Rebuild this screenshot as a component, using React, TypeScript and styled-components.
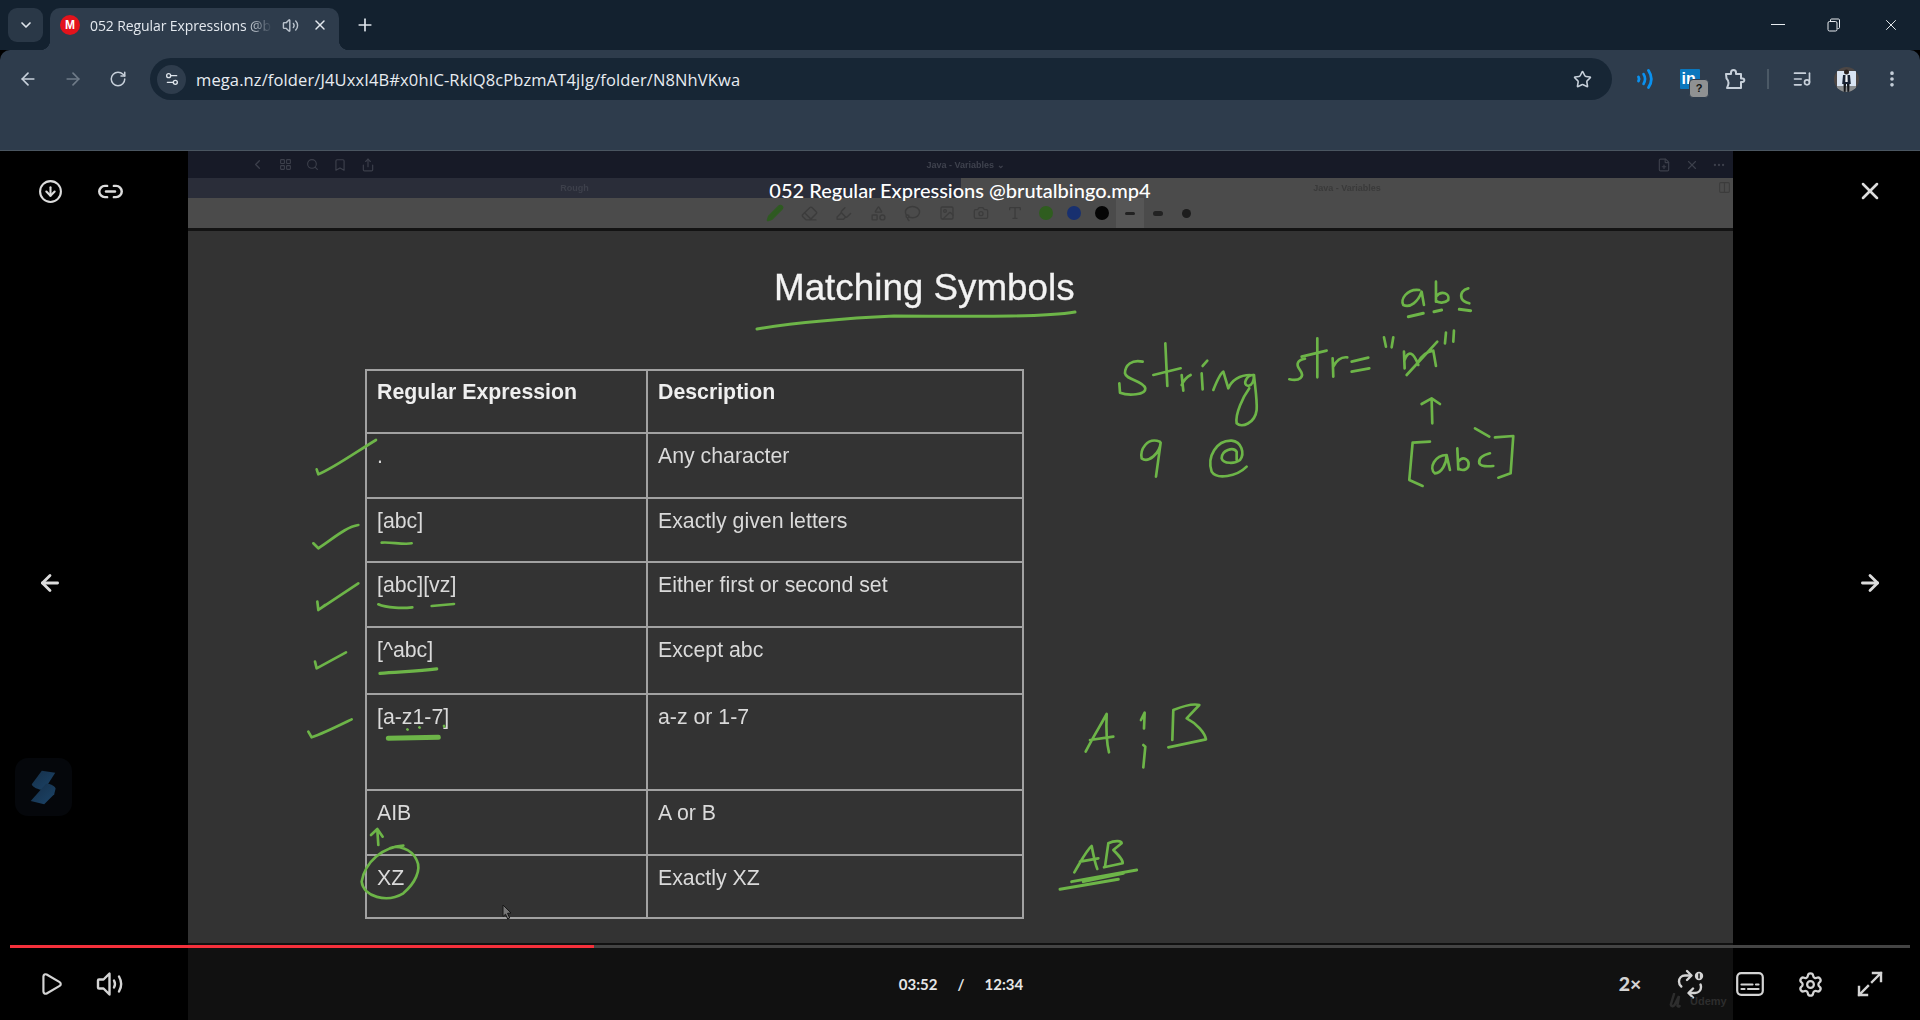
import React from "react";
import styled, { createGlobalStyle } from "styled-components";
import {
  ArrowLeft, ArrowRight, RotateCw, Star, Plus, X, ChevronDown, EllipsisVertical, Settings2, ListMusic,
  Volume2, CircleArrowDown, Link2, Play, Settings, Pen, Eraser, Highlighter, Shapes, Lasso, Image, Camera, Type,
  ChevronLeft, LayoutGrid, Search, Bookmark, Share, FilePlus, Ellipsis, Columns2,
} from "lucide-react";

const Global = createGlobalStyle`
  html, body { margin: 0; padding: 0; background: #000; }
  #root { width: 1920px; height: 1020px; overflow: hidden; }
`;

const Page = styled.div`
  width: 1920px; height: 1020px; display: flex; flex-direction: column; background: #000;
  font-family: "Open Sans", "Liberation Sans", sans-serif;
`;

/* ---------- browser chrome ---------- */
const TabStrip = styled.div`
  height: 50px; flex: none; background: #13212f; display: flex; align-items: flex-end; color: #dfe5ec;
`;
const TabMenu = styled.div`
  width: 35px; height: 34px; margin: 0 0 8px 8px; border-radius: 9px; background: #2a3847;
  display: flex; align-items: center; justify-content: center;
`;
const Tab = styled.div`
  position: relative; width: 289px; height: 42px; margin-left: 7px; background: #2e3c4c;
  border-radius: 10px 10px 0 0; display: flex; align-items: center; padding: 0 0 8px 10px; box-sizing: border-box;
  &::before, &::after { content: ""; position: absolute; bottom: 0; width: 10px; height: 10px; }
  &::before { left: -10px; background: radial-gradient(circle at 0 0, #13212f 10px, #2e3c4c 10.5px); }
  &::after { right: -10px; background: radial-gradient(circle at 100% 0, #13212f 10px, #2e3c4c 10.5px); }
`;
const Favicon = styled.span`
  width: 20px; height: 20px; border-radius: 50%; background: #e3131c; color: #fff; flex: none;
  font: 700 12px/20px "Liberation Sans", sans-serif; text-align: center;
`;
const TabTitle = styled.span`
  width: 182px; margin-left: 10px; white-space: nowrap; overflow: hidden; font-size: 14px; letter-spacing: -0.1px;
  color: #e3e8ee; mask-image: linear-gradient(to right, #000 86%, transparent 100%);
`;
const TabIcon = styled.span`
  width: 30px; display: flex; justify-content: center; color: ${(p: { $ml?: number; $dim?: boolean }) => (p.$dim ? "#b9c2cc" : "#e3e8ee")};
  margin-left: ${(p: { $ml?: number; $dim?: boolean }) => p.$ml ?? 0}px;
`;
const NewTab = styled.div` margin: 0 0 10px 11px; width: 30px; height: 30px; display: flex; align-items: center; justify-content: center; `;
const Spacer = styled.div` flex: 1; `;
const WinBtn = styled.div`
  width: ${(p: { $w?: number }) => p.$w ?? 56}px; height: 50px; display: flex; align-items: center; justify-content: center; color: #e8ecf0;
`;
const Toolbar = styled.div`
  flex: none; background: #2e3c4c; border-radius: 10px 10px 0 0;
  border-bottom: 1px solid #4a5560;
  display: flex; align-items: flex-start; padding: 8px 6px 0 5px; height: 92px; color: #c3ccd6;
`;
const NavSlot = styled.div`
  width: 45px; height: 42px; flex: none; display: flex; align-items: center; justify-content: center;
  color: ${(p: { $dim?: boolean }) => (p.$dim ? "#6f7b88" : "#c7d0da")}; position: relative;
`;
const Address = styled.div`
  width: 1462px; height: 42px; margin: 0 10px; flex: none; background: #172635; border-radius: 21px;
  display: flex; align-items: center; padding: 0 7px; box-sizing: border-box;
`;
const TuneChip = styled.div`
  width: 29px; height: 29px; border-radius: 50%; background: #2e3c4c; color: #dfe5ec; flex: none;
  display: flex; align-items: center; justify-content: center;
`;
const Url = styled.div` margin-left: 10px; flex: 1; font-size: 16.5px; color: #e8ecf1; white-space: nowrap; letter-spacing: 0.12px; `;
const StarSlot = styled.div` width: 30px; margin-right: 8px; display: flex; justify-content: center; color: #c7d0da; `;
const LinkedIn = styled.span`
  width: 20px; height: 20px; background: #0a77bd; color: #fff; border-radius: 1px;
  font: 700 16px/20px "Liberation Sans", sans-serif; text-indent: 2px;
`;
const Badge = styled.span`
  position: absolute; left: 22px; top: 21px; width: 18px; height: 17px; border-radius: 4px; background: #8f9192;
  border: 1px solid #2e3c4c; color: #111; font: 700 11px/17px "Liberation Sans", sans-serif; text-align: center;
`;
const VRule = styled.div` width: 2px; height: 20px; margin: 11px 10px 0; background: #4b5966; flex: none; `;

/* ---------- player ---------- */
const Player = styled.div` position: relative; flex: 1; display: flex; flex-direction: column; background: #000; color: #fff; `;
const FileName = styled.div`
  position: absolute; top: 26px; left: 0; right: 0; text-align: center; color: #fff;
  font: 500 20px/26px Lato, "Liberation Sans", sans-serif; z-index: 3;
`;
const Stage = styled.div` height: 792px; flex: none; display: flex; `;
const Side = styled.div`
  width: ${(p: { $w: number }) => p.$w}px; flex: none; background: #000; display: flex; flex-direction: column; color: #dcdcdc;
  padding-top: 27px; box-sizing: border-box;
`;
const SideRow = styled.div`
  display: flex; height: 26px; padding-left: 20px; justify-content: ${(p: { $end?: boolean }) => (p.$end ? "flex-end" : "flex-start")};
  ${(p: { $end?: boolean }) => (p.$end ? "padding: 0 20px 0 0;" : "")}
`;
const SideSlot = styled.div` width: 60px; height: 26px; display: flex; align-items: center; justify-content: center; `;
const Pager = styled(SideRow)` margin-top: 366px; `;
const LogoChip = styled.div`
  width: 57px; height: 58px; margin: 162px 0 0 15px; background: #05070b; border-radius: 13px;
`;

const Video = styled.div` flex: 1; display: flex; flex-direction: column; min-width: 0; filter: blur(0.55px); `;
const AppTop = styled.div`
  height: 27px; flex: none; background: #171a27; display: grid; grid-template-columns: 1fr auto 1fr; align-items: center; color: #3c3f4b;
`;
const AppGroup = styled.div`
  display: flex; align-items: center; justify-content: ${(p: { $end?: boolean }) => (p.$end ? "flex-end" : "flex-start")};
  padding: ${(p: { $end?: boolean }) => (p.$end ? "0" : "0 0 0 56px")};
`;
const AppSlot = styled.div` width: 27.5px; display: flex; justify-content: center; `;
const DimText = styled.span`
  font: 700 9px/12px "Liberation Sans", sans-serif; color: ${(p: { $c?: string }) => p.$c ?? "#3f424e"};
`;
const CenterDim = styled(DimText)` margin-left: 10px; `;
const TabRow = styled.div` height: 20px; flex: none; display: flex; `;
const DocTabOff = styled.div`
  width: 773px; background: #2a2d39; display: flex; align-items: center; justify-content: center;
`;
const DocTabOn = styled.div`
  flex: 1; background: #4b4b4b; display: flex; align-items: center; justify-content: center; position: relative;
`;
const SplitIcon = styled.span` position: absolute; right: 2px; top: 3px; color: #3c3c3c; display: flex; `;
const PenBar = styled.div`
  height: 30px; flex: none; background: #4b4b4b; display: flex; align-items: center; padding-left: 570px; color: #3c3c3c;
`;
const PenSlot = styled.div` width: 34.3px; display: flex; justify-content: center; color: ${(p: { $c?: string }) => p.$c ?? "inherit"}; `;
const DotSlot = styled.div` width: 28px; height: 30px; display: flex; align-items: center; justify-content: center; background: ${(p: { $on?: boolean }) => (p.$on ? "#565656" : "transparent")}; `;
const Dot = styled.span`
  width: ${(p: { $s: number; $c: string }) => p.$s}px; height: ${(p: { $s: number; $c: string }) => p.$s}px;
  border-radius: 50%; background: ${(p: { $s: number; $c: string }) => p.$c};
`;
const Dash = styled.span` width: 10px; height: ${(p: { $h?: number }) => p.$h ?? 3}px; background: #222; border-radius: 3px; `;
const HeavyRule = styled.div` height: 3px; flex: none; background: #131313; `;
const Canvas = styled.div`
  position: relative; flex: 1; background: #333; display: flex; flex-direction: column; padding-left: 177px;
`;
const Heading = styled.h1`
  margin: 37px 0 0 409px; font: 400 36.8px/40px "Liberation Sans", sans-serif; color: #f3f3f3; height: 40px;
  -webkit-text-stroke: 0.3px #f3f3f3;
`;
const Sheet = styled.table`
  margin-top: 61px; width: 657px; border-collapse: collapse; table-layout: fixed; color: #dadada;
  font: 400 21.3px/26px "Liberation Sans", sans-serif;
`;
const Row = styled.tr` height: ${(p: { $h: number }) => p.$h}px; `;
const Cell = styled.td`
  border: 2px solid #a2a2a2; padding: 9px 0 0 10px; vertical-align: top; box-sizing: border-box;
`;
const HeadCell = styled.th`
  border: 2px solid #a2a2a2; padding: 8px 0 0 10px; vertical-align: top; text-align: left; font-weight: 700; color: #efefef;
`;
const Ink = styled.svg` position: absolute; inset: 0; width: 100%; height: 100%; pointer-events: none; `;

const Controls = styled.div`
  height: 77px; flex: none; padding-top: 2px; box-sizing: border-box;
  background: linear-gradient(to right, #000 188px, #111 188px, #111 1733px, #000 1733px);
  display: flex; flex-direction: column; position: relative;
`;
const Track = styled.div` height: 3px; margin: 0 10px; background: #444; flex: none; `;
const Progress = styled.div` height: 100%; background: #f5303b; `;
const CtrlRow = styled.div` flex: 1; display: grid; grid-template-columns: 1fr auto 1fr; align-items: center; color: #d4d4d4; `;
const CtrlGroup = styled.div`
  display: flex; align-items: center; justify-content: ${(p: { $end?: boolean }) => (p.$end ? "flex-end" : "flex-start")};
  padding: ${(p: { $end?: boolean }) => (p.$end ? "0 20px 0 0" : "0 0 0 21px")};
`;
const CtrlSlot = styled.div` width: 60px; height: 30px; display: flex; align-items: center; justify-content: center; `;
const Speed = styled.span` font: 900 19.5px/30px Lato, "Liberation Sans", sans-serif; color: #d4d4d4; `;
const Times = styled.div`
  display: flex; align-items: center; font: 700 15px/20px Lato, "Liberation Sans", sans-serif; color: #e6e6e6; margin-left: 2px;
`;
const Slash = styled.span` margin: 0 20px; `;
const Watermark = styled.div`
  position: absolute; left: 1667px; top: 50px; display: flex; align-items: center; gap: 3px; color: #2d2d2d;
  font: 700 11px/14px "Liberation Sans", sans-serif;
`;
const Cursor = styled.svg` position: absolute; left: 314px; top: 673px; width: 11px; height: 16px; `;

const INK = "#6db548";

const RestoreIcon = () => (
  <svg width="14" height="14" viewBox="0 0 14 14" fill="none" stroke="currentColor" strokeWidth="1">
    <rect x="1" y="3.5" width="9" height="9.5" rx="1.5" />
    <path d="M3.5 3V2c0-.6.5-1 1-1h7c.6 0 1 .5 1 1v7.5c0 .6-.4 1-1 1h-1" />
  </svg>
);
const Radio = () => (
  <svg width="20" height="22" viewBox="0 0 20 22" fill="none" stroke="#0a91ef" strokeLinecap="round">
    <path d="M3.500 9c.8 1.300.8 2.700 0 4" strokeWidth="2.800" />
    <path d="M8.500 6c2 3.200 2 6.800 0 10" strokeWidth="2.600" />
    <path d="M13.500 2.500c3.600 5.400 3.600 11.600 0 17" strokeWidth="2.800" />
  </svg>
);
const PuzzleOutline = () => (
  <svg width="22" height="22" viewBox="0 0 22 22" fill="none" stroke="currentColor" strokeWidth="2" strokeLinejoin="round">
    <path d="M2 6h5V4.500a2.500 2.500 0 0 1 5 0V6h5v4.500h1.500a1.800 1.800 0 0 1 0 3.600H17V20H3l1.200-3.200c.5-1.400.5-2.400 0-3.500C3.800 12 3 11 2.500 10.500z" />
  </svg>
);
const Avatar = () => (
  <svg width="25" height="25" viewBox="0 0 25 25">
    <clipPath id="av"><circle cx="12.500" cy="12.500" r="12.500" /></clipPath>
    <g clipPath="url(#av)">
      <rect width="25" height="25" fill="#4c4644" />
      <rect x="3" y="4" width="19" height="15" fill="#d9e4f2" />
      <rect x="3" y="19" width="19" height="6" fill="#8a8d8f" />
      <circle cx="12.500" cy="5" r="2.500" fill="#2a2220" />
      <path d="M9 8h7l.8 9H8.200z" fill="#182233" />
      <path d="M11.500 8h2l.2 7h-2.400z" fill="#f2f4f6" />
      <path d="M9.500 17h2.500l-.4 8H9.800zM13 17h2.500l-.300 8h-1.800z" fill="#14171c" />
    </g>
  </svg>
);
const Speaker = () => (
  <svg width="30" height="26" viewBox="0 0 30 26" fill="none" stroke="currentColor" strokeWidth="2.400" strokeLinecap="round" strokeLinejoin="round">
    <path d="M2 9.500c0-.6.400-1 1-1h4.500L13.500 2.500v21L7.500 17.500H3c-.6 0-1-.4-1-1z" />
    <path d="M18 9.500c1.300 2.300 1.300 4.700 0 7" />
    <path d="M23 5.500c2.800 4.800 2.800 10.200 0 15" />
  </svg>
);
const Replay = () => (
  <svg width="30" height="30" viewBox="0 0 30 30" fill="none" stroke="currentColor" strokeWidth="2.400" strokeLinecap="round" strokeLinejoin="round">
    <path d="M15 6.500H10c-3.500 0-6 2.700-6 6 0 2 .8 3.800 2.300 5" />
    <path d="M12 2l4.500 4.500L12 11" />
    <path d="M15 24h5c3.500 0 6-2.700 6-6 0-1-.2-1.700-.5-2.500" />
    <path d="M18 19.500L13.500 24l4.500 4.500" />
    <circle cx="24" cy="7" r="4.200" fill="currentColor" stroke="none" />
    <path d="M24 5v4" stroke="#111" strokeWidth="1.500" />
  </svg>
);
const Subtitles = () => (
  <svg width="28" height="24" viewBox="0 0 28 24" fill="none" stroke="currentColor" strokeWidth="2.200" strokeLinecap="round">
    <rect x="1.200" y="1.200" width="25.600" height="21.600" rx="4" />
    <path d="M5.500 12.500h11M20 12.500h2.500M5.500 17h3M12 17h10.500" />
  </svg>
);
const Fullscreen = () => (
  <svg width="28" height="28" viewBox="0 0 28 28" fill="none" stroke="currentColor" strokeWidth="2.400" strokeLinecap="square">
    <path d="M17 3h8v8M25 3l-9 9M3 17v8h8M3 25l9-9" />
  </svg>
);

export default function App() {
  return (
    <Page>
      <Global />
      <TabStrip>
        <TabMenu><ChevronDown size={16} strokeWidth={2.5} /></TabMenu>
        <Tab>
          <Favicon>M</Favicon>
          <TabTitle>052 Regular Expressions @brutalbingo.mp4</TabTitle>
          <TabIcon $ml={3} $dim><Volume2 size={17} /></TabIcon>
          <TabIcon><X size={16} strokeWidth={2.2} /></TabIcon>
        </Tab>
        <NewTab><Plus size={20} strokeWidth={2} /></NewTab>
        <Spacer />
        <WinBtn $w={56}><svg width="14" height="2"><rect width="14" height="1" fill="currentColor" /></svg></WinBtn>
        <WinBtn $w={56}><RestoreIcon /></WinBtn>
        <WinBtn $w={58}><X size={18} strokeWidth={1.3} /></WinBtn>
      </TabStrip>
      <Toolbar>
        <NavSlot><ArrowLeft size={20} /></NavSlot>
        <NavSlot $dim><ArrowRight size={20} /></NavSlot>
        <NavSlot><RotateCw size={18} /></NavSlot>
        <Address>
          <TuneChip><Settings2 size={16} /></TuneChip>
          <Url>mega.nz/folder/J4UxxI4B#x0hIC-RklQ8cPbzmAT4jIg/folder/N8NhVKwa</Url>
          <StarSlot><Star size={19} /></StarSlot>
        </Address>
        <NavSlot><Radio /></NavSlot>
        <NavSlot><LinkedIn>in</LinkedIn><Badge>?</Badge></NavSlot>
        <NavSlot><PuzzleOutline /></NavSlot>
        <VRule />
        <NavSlot><ListMusic size={20} /></NavSlot>
        <NavSlot><Avatar /></NavSlot>
        <NavSlot><EllipsisVertical size={20} strokeWidth={2.4} /></NavSlot>
      </Toolbar>
      <Player>
        <FileName>052 Regular Expressions @brutalbingo.mp4</FileName>
        <Stage>
          <Side $w={188}>
            <SideRow>
              <SideSlot><CircleArrowDown size={25} strokeWidth={2} /></SideSlot>
              <SideSlot><Link2 size={27} strokeWidth={2.2} /></SideSlot>
            </SideRow>
            <Pager><SideSlot><ArrowLeft size={26} strokeWidth={2.6} /></SideSlot></Pager>
            <LogoChip>
              <svg width="57" height="58" viewBox="45 62 170 173">
                <defs>
                  <linearGradient id="sg" x1="0" y1="0" x2="1" y2="1">
                    <stop offset="0" stopColor="#152f49" />
                    <stop offset="1" stopColor="#1c4468" />
                  </linearGradient>
                </defs>
                <path d="M125 100l40 6-32 50c-10 4-36-6-38-16z" fill="url(#sg)" />
                <path d="M136 140c10-4 30 6 30 14l-4 16-30 30-40-10z" fill="url(#sg)" />
              </svg>
            </LogoChip>
          </Side>
          <Video>
            <AppTop>
              <AppGroup>
                <AppSlot><ChevronLeft size={15} /></AppSlot>
                <AppSlot><LayoutGrid size={13} /></AppSlot>
                <AppSlot><Search size={13} /></AppSlot>
                <AppSlot><Bookmark size={14} /></AppSlot>
                <AppSlot><Share size={14} /></AppSlot>
              </AppGroup>
              <CenterDim>Java - Variables ⌄</CenterDim>
              <AppGroup $end>
                <AppSlot><FilePlus size={14} /></AppSlot>
                <AppSlot><X size={14} /></AppSlot>
                <AppSlot><Ellipsis size={14} /></AppSlot>
              </AppGroup>
            </AppTop>
            <TabRow>
              <DocTabOff><DimText $c="#3d404b">Rough</DimText></DocTabOff>
              <DocTabOn>
                <DimText $c="#3a3a3a">Java - Variables</DimText>
                <SplitIcon><Columns2 size={13} /></SplitIcon>
              </DocTabOn>
            </TabRow>
            <PenBar>
              <PenSlot $c="#2f5a22"><Pen size={18} fill="#2f5a22" /></PenSlot>
              <PenSlot><Eraser size={17} /></PenSlot>
              <PenSlot><Highlighter size={17} /></PenSlot>
              <PenSlot><Shapes size={17} /></PenSlot>
              <PenSlot><Lasso size={17} /></PenSlot>
              <PenSlot><Image size={16} /></PenSlot>
              <PenSlot><Camera size={16} /></PenSlot>
              <PenSlot><Type size={16} /></PenSlot>
              <DotSlot><Dot $s={14} $c="#2f5d1f" /></DotSlot>
              <DotSlot><Dot $s={14} $c="#18306f" /></DotSlot>
              <DotSlot><Dot $s={14} $c="#050505" /></DotSlot>
              <DotSlot $on><Dash /></DotSlot>
              <DotSlot><Dash $h={5} /></DotSlot>
              <DotSlot><Dot $s={9} $c="#1d1d1d" /></DotSlot>
            </PenBar>
            <HeavyRule />
            <Canvas>
              <Heading>Matching Symbols</Heading>
              <Sheet>
                <colgroup><col style={{ width: 281 }} /><col style={{ width: 376 }} /></colgroup>
                <tbody>
                  <Row $h={63}><HeadCell>Regular Expression</HeadCell><HeadCell>Description</HeadCell></Row>
                  <Row $h={65}><Cell>.</Cell><Cell>Any character</Cell></Row>
                  <Row $h={64}><Cell>[abc]</Cell><Cell>Exactly given letters</Cell></Row>
                  <Row $h={65}><Cell>[abc][vz]</Cell><Cell>Either first or second set</Cell></Row>
                  <Row $h={67}><Cell>[^abc]</Cell><Cell>Except abc</Cell></Row>
                  <Row $h={96}><Cell>[a-z1-7]</Cell><Cell>a-z or 1-7</Cell></Row>
                  <Row $h={65}><Cell>AIB</Cell><Cell>A or B</Cell></Row>
                  <Row $h={63}><Cell>XZ</Cell><Cell>Exactly XZ</Cell></Row>
                </tbody>
              </Sheet>
              <Ink viewBox="188 231 1545 712" fill="none" stroke={INK} strokeLinecap="round" strokeLinejoin="round">
                <path d="M757 329C800 322 850 318 894 316C950 316 1040 318 1075 312" strokeWidth="3" />
                {/* top-right notes */}
                <g transform="translate(1060 260) scale(.3333)" strokeWidth="8">
                  <path d="M248 305C215 298 195 315 195 340C198 360 250 362 256 385C258 405 205 408 180 398L178 370" />
                  <path d="M316 250L322 378M280 345L362 325" />
                  <path d="M365 345L370 392M365 375C372 360 378 352 392 345" />
                  <path d="M425 340L428 388M428 318L442 302" />
                  <path d="M460 390C470 365 480 340 490 335L505 385C515 360 540 345 570 345" />
                  <path d="M580 345C560 345 545 375 565 378C578 375 582 360 582 345C585 380 592 420 590 450C585 490 545 505 530 490C525 460 550 410 568 385" />
                  <path d="M735 296C715 300 705 310 720 330C735 350 720 365 688 358" />
                  <path d="M772 235L772 352M725 290L800 272" />
                  <path d="M818 295L820 350M820 320C830 300 845 290 862 292" />
                  <path d="M875 305L925 293M875 335L928 325" />
                  <path d="M972 232L978 260M1000 232L995 262" />
                  <path d="M1032 275L1034 325M1034 300C1045 270 1060 275 1075 315M1072 310C1085 285 1100 275 1120 272L1128 318M1040 345L1132 245" />
                  <path d="M1158 218L1155 250M1182 212L1180 245" />
                  <path d="M1115 418L1117 490M1085 432L1115 415L1140 432" />
                  <path d="M1110 545L1058 548L1048 660L1088 678" />
                  <path d="M1160 585C1125 585 1105 625 1125 640C1145 640 1160 610 1160 585L1170 630" />
                  <path d="M1192 565L1195 628M1195 605C1210 585 1230 600 1225 620C1215 635 1200 630 1195 625" />
                  <path d="M1290 580C1270 585 1255 595 1258 610C1262 618 1280 620 1300 618M1245 505L1288 530" />
                  <path d="M1305 532L1360 528L1352 640L1315 653" />
                  <path d="M300 545C260 530 240 570 245 595C265 610 300 580 302 548L288 650" />
                  <path d="M560 620C530 650 470 660 455 635C440 590 470 540 515 542C545 545 555 580 540 600C525 612 490 612 485 595C485 570 520 560 530 575L530 600" />
                  <path d="M1078 90C1040 85 1020 120 1030 135C1050 145 1075 125 1085 95L1092 135" />
                  <path d="M1128 65L1128 125M1128 110C1145 90 1170 100 1165 120C1155 130 1135 130 1128 122" />
                  <path d="M1225 85C1210 88 1200 100 1205 115C1210 125 1220 128 1228 130" />
                  <path d="M1045 170L1090 160M1122 155L1145 150M1198 148L1232 152" strokeWidth="9" />
                </g>
                {/* table marks, upper */}
                <g transform="translate(290 360) scale(.3333)" strokeWidth="8">
                  <path d="M80 328L85 343C130 325 200 275 258 240" />
                  <path d="M70 550L85 565C130 535 170 500 205 495" />
                  <path d="M275 548C300 545 340 555 365 550" />
                  <path d="M82 725L85 750L205 670M85 750L105 735" />
                  <path d="M265 733C290 745 340 745 367 742M425 738L492 732" />
                  <path d="M75 905L80 925L168 877" />
                  <path d="M270 940C320 935 380 935 440 927" strokeWidth="10" />
                </g>
                {/* table marks, lower */}
                <g transform="translate(290 680) scale(.3333)" strokeWidth="8">
                  <path d="M55 155L65 172C100 160 150 135 185 118" />
                  <path d="M295 175L445 172" strokeWidth="15" />
                  <path d="M352 148L353 149M388 142L389 143M462 138L463 140" />
                  <path d="M265 495L262 450M243 465L262 447L278 470" />
                  <path d="M340 497C280 500 225 545 215 605C220 650 290 670 340 640C375 610 395 570 380 540C365 505 320 495 300 505" />
                </g>
                {/* A | B */}
                <g transform="translate(1040 680) scale(.3333)" strokeWidth="8">
                  <path d="M137 215C160 170 185 130 200 102C198 150 200 190 207 217M150 180L220 170" />
                  <path d="M303 120L314 98L312 145M310 195L316 200L310 262" />
                  <path d="M400 90L397 180M400 90C430 78 460 70 478 75L440 115C470 130 495 160 498 178L385 202" />
                  <path d="M103 577C125 540 140 510 155 498C160 525 165 550 172 567M120 545L175 535" />
                  <path d="M205 490L195 560M205 490C225 480 245 482 245 490L220 510C235 525 250 540 248 550L192 562" />
                  <path d="M60 628L235 598M95 605L290 570" strokeWidth="9" />
                  <path d="M130 605L250 580" strokeWidth="9" />
                </g>
              </Ink>
              <Cursor viewBox="0 0 11 16">
                <path d="M1 1l8 8-3.500.3 2.200 4.700-2 1-2.200-4.800L1 12.500z" fill="#777" stroke="#161616" strokeWidth="1" />
              </Cursor>
            </Canvas>
          </Video>
          <Side $w={187}>
            <SideRow $end><SideSlot><X size={28} strokeWidth={2.2} /></SideSlot></SideRow>
            <Pager $end><SideSlot><ArrowRight size={26} strokeWidth={2.6} /></SideSlot></Pager>
          </Side>
        </Stage>
        <Controls>
          <Track><Progress style={{ width: `${((594 - 10) / 1900) * 100}%` }} /></Track>
          <CtrlRow>
            <CtrlGroup>
              <CtrlSlot><Play size={26} strokeWidth={2} /></CtrlSlot>
              <CtrlSlot><Speaker /></CtrlSlot>
            </CtrlGroup>
            <Times><span>03:52</span><Slash>/</Slash><span>12:34</span></Times>
            <CtrlGroup $end>
              <CtrlSlot><Speed>2×</Speed></CtrlSlot>
              <CtrlSlot><Replay /></CtrlSlot>
              <CtrlSlot><Subtitles /></CtrlSlot>
              <CtrlSlot><Settings size={27} strokeWidth={2} /></CtrlSlot>
              <CtrlSlot><Fullscreen /></CtrlSlot>
            </CtrlGroup>
          </CtrlRow>
          <Watermark>
            <svg width="20" height="16" viewBox="0 0 20 16" fill="none" stroke="currentColor" strokeWidth="2.500" strokeLinecap="round">
              <path d="M7 1L4 11c-.6 2 2 3 3.500 1L12 3l-1.500 9c-.3 1.500 1 2 2 1" />
            </svg>
            Udemy
          </Watermark>
        </Controls>
      </Player>
    </Page>
  );
}
